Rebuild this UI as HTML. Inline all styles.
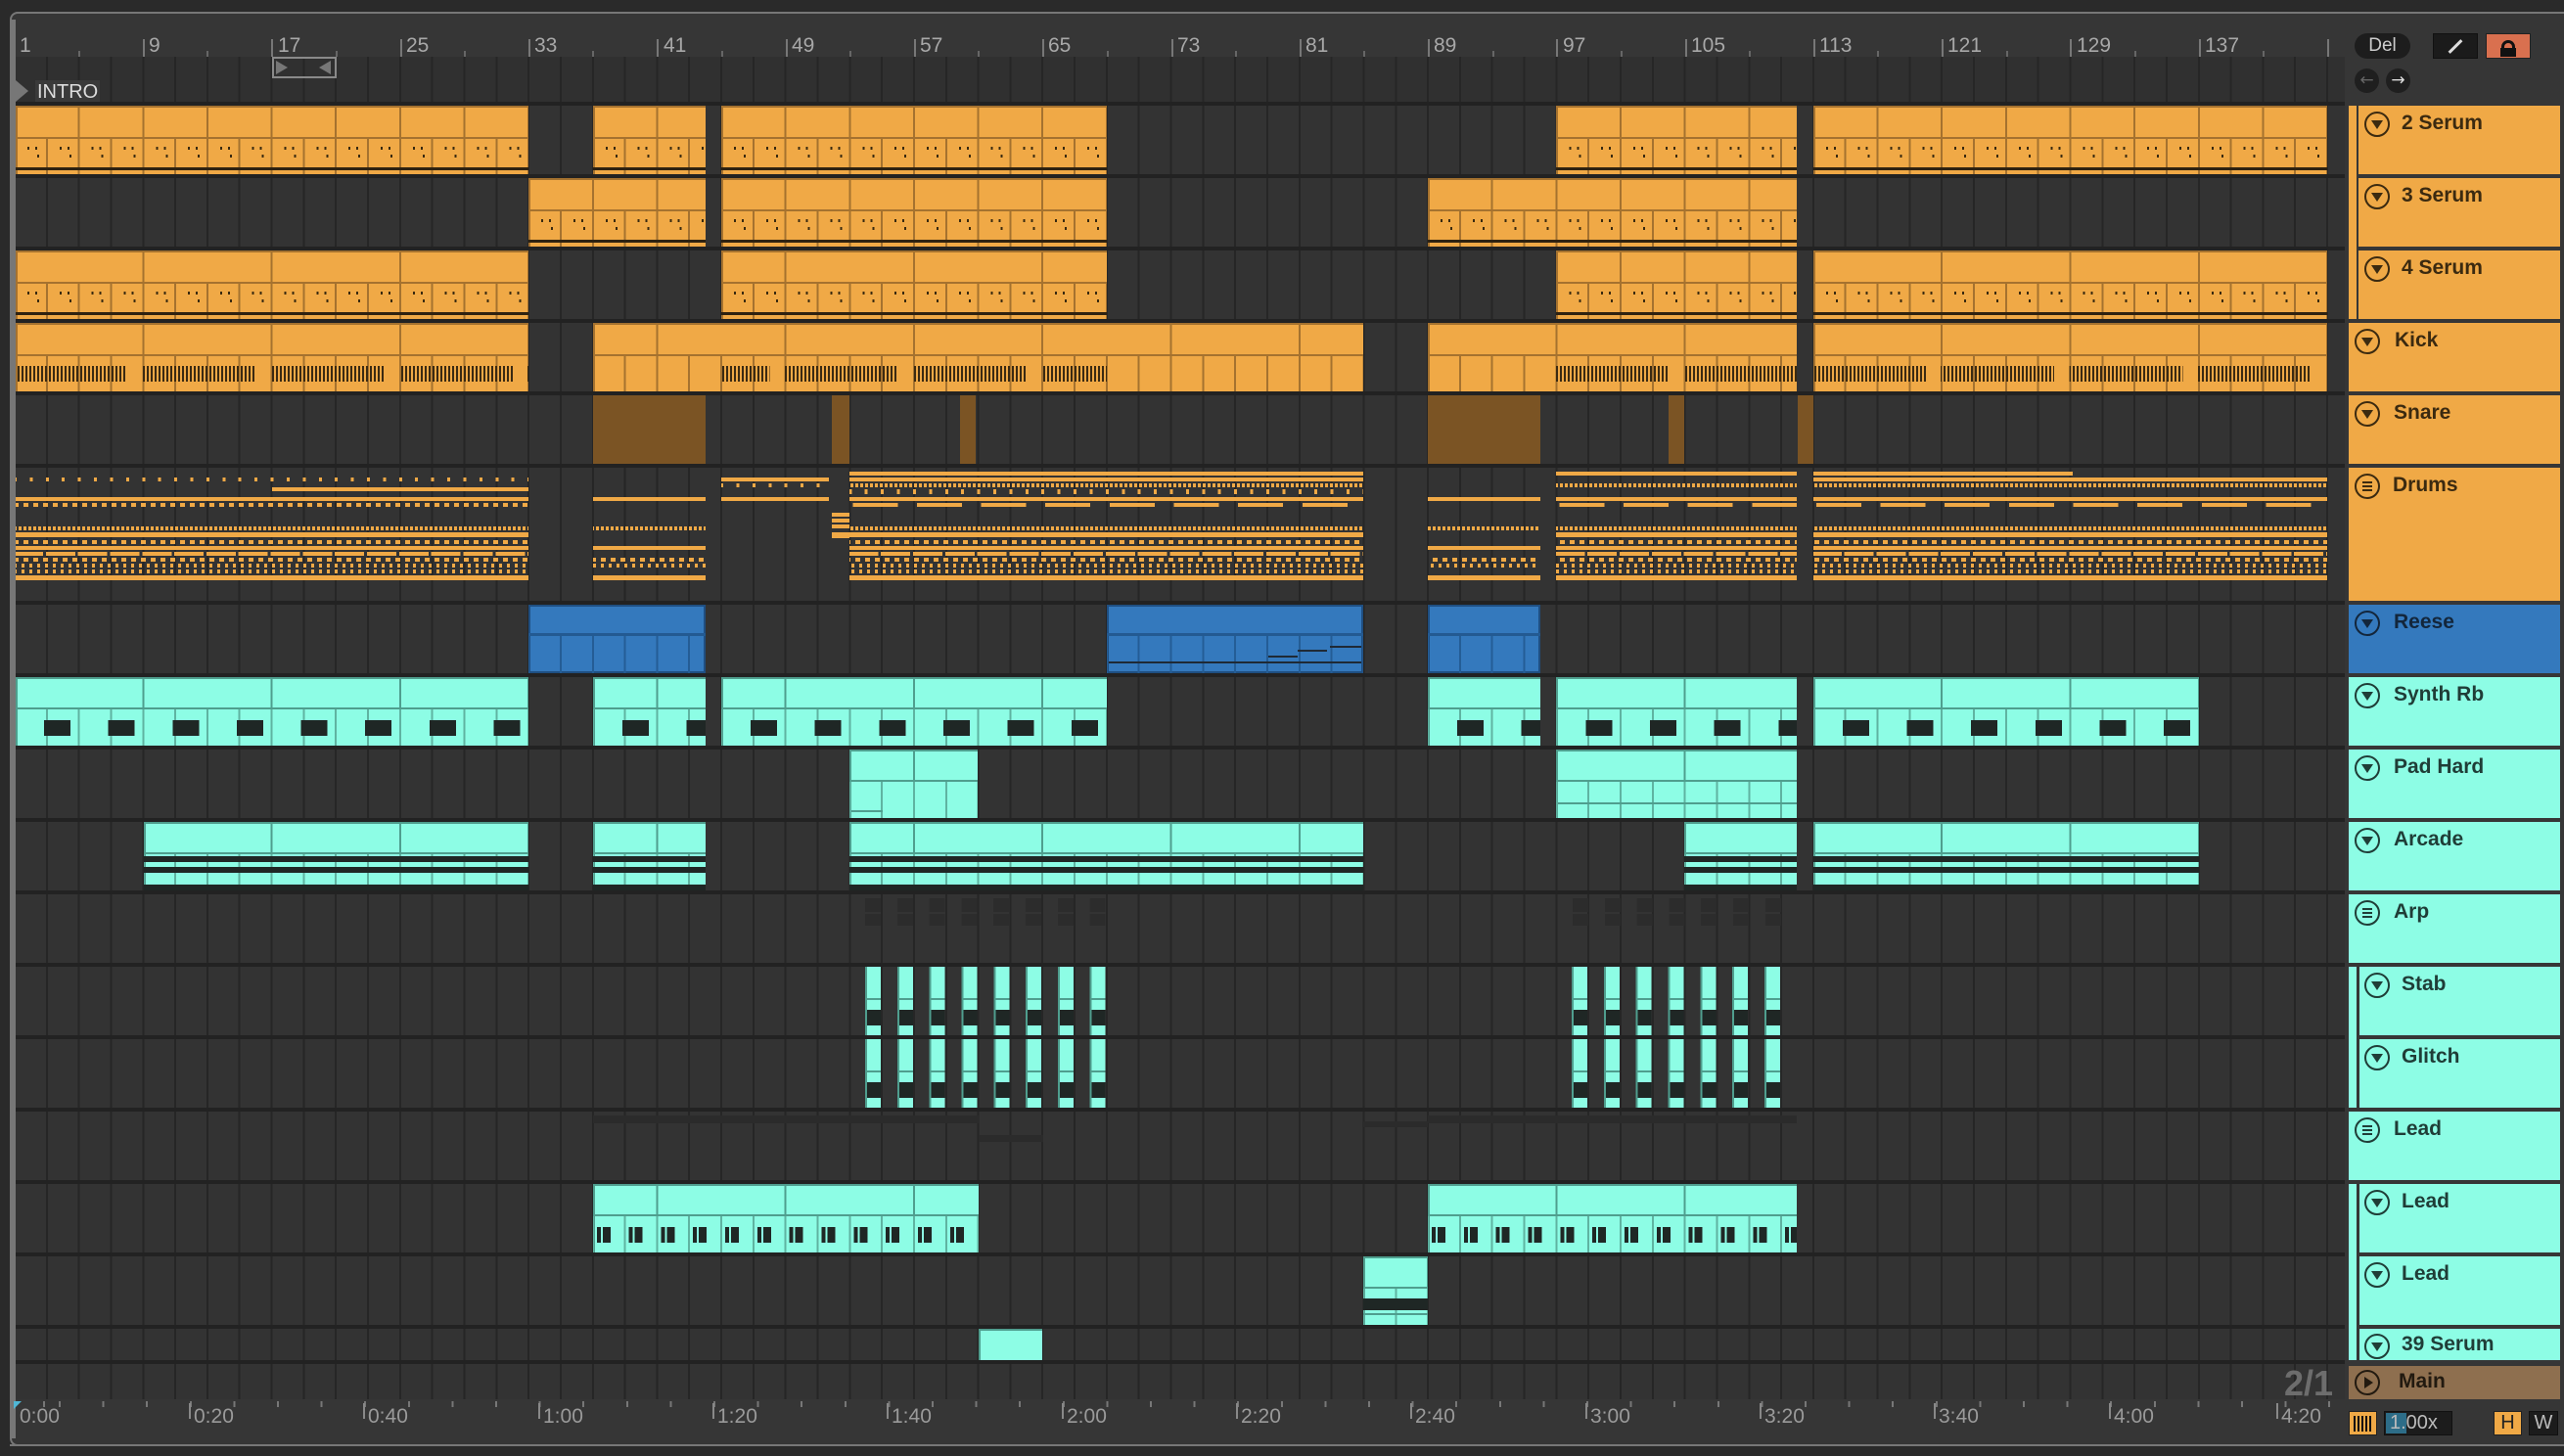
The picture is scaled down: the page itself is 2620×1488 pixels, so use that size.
<!DOCTYPE html>
<html><head><meta charset="utf-8">
<style>
*{margin:0;padding:0;box-sizing:border-box}
body{width:2620px;height:1488px;background:#2a2a2a;position:relative;overflow:hidden;font-family:"Liberation Sans",sans-serif}
.abs{position:absolute}
#frame{position:absolute;left:10px;top:12px;width:2620px;height:1466px;border:2px solid #777;border-right:none;border-radius:8px 0 0 8px;background:#363636}
#grid{position:absolute;left:16px;top:104px;width:2380px;height:1326px;background:#222}
.row{position:absolute;left:16px;width:2380px;background-color:#333;background-image:repeating-linear-gradient(90deg,#262626 0 2px,transparent 2px 32.82px);background-attachment:fixed;background-position:14px 0}
.topgrid{position:absolute;left:16px;top:58px;width:2380px;height:46px;background-color:#303030;background-image:repeating-linear-gradient(90deg,#262626 0 2px,transparent 2px 32.82px);background-attachment:fixed;background-position:14px 0}
.c{position:absolute;overflow:hidden}
.o{background:#f0a946;box-shadow:inset 2px 2px 0 #a5722f}
.o .h{position:absolute;left:0;right:0;top:0;height:34px;border-bottom:2px solid #a5722f;background:repeating-linear-gradient(90deg,#a5722f 0 2px,transparent 2px 65.64px);background-attachment:fixed;background-position:14px 0}
.o .h8{background:repeating-linear-gradient(90deg,#a5722f 0 2px,transparent 2px 131.28px);background-attachment:fixed;background-position:14px 0}
.o .b{position:absolute;left:0;right:0;top:34px;bottom:0;background:repeating-linear-gradient(90deg,#a5722f 0 2px,transparent 2px 32.82px);background-attachment:fixed;background-position:14px 0}
.dots{position:absolute;left:0;right:0;top:42px;height:3px;background:repeating-linear-gradient(90deg,transparent 0 14px,#3a2a10 14px 16px,transparent 16px 22px,#3a2a10 22px 24px,transparent 24px 32.82px);background-attachment:fixed;background-position:14px 0}
.dots2{position:absolute;left:0;right:0;top:50px;height:3px;background:repeating-linear-gradient(90deg,transparent 0 24px,#3a2a10 24px 26px,transparent 26px 32.82px);background-attachment:fixed;background-position:14px 0}
.dk{position:absolute;left:0;right:0;top:63px;height:3px;background:#2f2210}
.bar{position:absolute;left:0;right:0;top:44px;height:16px;background:repeating-linear-gradient(90deg,transparent 0 116px,#f0a946 116px 131.28px),repeating-linear-gradient(90deg,#3b2a12 0 2px,transparent 2px 4px);background-attachment:fixed;background-position:14px 0}
.sn{background:#7b5424}
.cy{background:#8dfde5;box-shadow:inset 2px 2px 0 #4f9e8e}
.cy .h{position:absolute;left:0;right:0;top:0;height:33px;border-bottom:2px solid #4f9e8e;background:repeating-linear-gradient(90deg,#4f9e8e 0 2px,transparent 2px 131.28px);background-attachment:fixed;background-position:14px 0}
.cy .b{position:absolute;left:0;right:0;top:33px;bottom:0;background:repeating-linear-gradient(90deg,#5fb3a1 0 2px,transparent 2px 32.82px);background-attachment:fixed;background-position:14px 0}
.blk{position:absolute;left:0;right:0;top:44px;height:16px;background:repeating-linear-gradient(90deg,transparent 0 31px,#1f2725 31px 58px,transparent 58px 65.64px);background-attachment:fixed;background-position:14px 0}
.lblk{position:absolute;left:0;right:0;top:44px;height:16px;background:repeating-linear-gradient(90deg,transparent 0 5px,#1f2725 5px 9px,transparent 9px 11px,#1f2725 11px 19px,transparent 19px 32.82px);background-attachment:fixed;background-position:14px 0}
.st{position:absolute;left:0;right:0;height:6px;background:#1f2725}
.bl{background:#3479bd;box-shadow:inset 0 0 0 2px #1f4f82}
.bl .h{position:absolute;left:0;right:0;top:0;height:32px;border-bottom:3px solid #235a92}
.bl .b{position:absolute;left:0;right:0;top:32px;bottom:0;background:repeating-linear-gradient(90deg,#245d96 0 2px,transparent 2px 32.82px);background-attachment:fixed;background-position:14px 0}
.dr{position:absolute;height:136px;top:478px}
.dr i{position:absolute;left:0;right:0;display:block;background-attachment:fixed;background-position:14px 0}
.sol{background:#f0a946}
.df{background:repeating-linear-gradient(90deg,#f0a946 0 3px,transparent 3px 5px)}
.dt{background:repeating-linear-gradient(90deg,#f0a946 0 3px,transparent 3px 16.41px)}
.dg{background:repeating-linear-gradient(90deg,transparent 0 4px,#f0a946 4px 50px,transparent 50px 65.64px)}
.dq{background:repeating-linear-gradient(90deg,#f0a946 0 5px,transparent 5px 10px)}
.dl{background:repeating-linear-gradient(90deg,#f0a946 0 30px,transparent 30px 32.82px)}
.dm{background:repeating-linear-gradient(90deg,#f0a946 0 3px,transparent 3px 8px)}
.rl{position:absolute;top:34px;font-size:21px;color:#a8a8a8;line-height:26px}
.tk{position:absolute;top:40px;width:2px;height:18px;background:#777}
.tm{position:absolute;top:52px;width:2px;height:6px;background:#666}
.hd{position:absolute;right:4px;font-size:21px;font-weight:bold;line-height:28px}
.hd span{position:absolute;top:4px}
.ic{position:absolute;top:6px;width:26px;height:26px;border:2px solid currentColor;border-radius:50%}
.ic:after{content:"";position:absolute;left:5px;top:7px;border-left:6px solid transparent;border-right:6px solid transparent;border-top:9px solid currentColor}
.ig{position:absolute;top:6px;width:26px;height:26px;border:2px solid currentColor;border-radius:50%}
.ig:after{content:"";position:absolute;left:6px;top:6px;width:10px;height:2px;background:currentColor;box-shadow:0 4px 0 currentColor,0 8px 0 currentColor}
.ho{background:#f0a946;color:#3b2a10}
.hc{background:#8dfde5;color:#1f3d37}
.strip{position:absolute;left:2400px;width:8px}
.tl{position:absolute;top:1436px;font-size:21px;color:#9a9a9a}
.tb{position:absolute;top:1434px;width:2px;height:16px;background:#888}
</style></head><body>
<div id="frame"></div>
<div class="topgrid"></div>
<div class="rl" style="left:20px">1</div><div class="tk" style="left:14px"></div>
<div class="rl" style="left:152px">9</div><div class="tk" style="left:146px"></div>
<div class="rl" style="left:284px">17</div><div class="tk" style="left:277px"></div>
<div class="rl" style="left:415px">25</div><div class="tk" style="left:409px"></div>
<div class="rl" style="left:546px">33</div><div class="tk" style="left:540px"></div>
<div class="rl" style="left:678px">41</div><div class="tk" style="left:671px"></div>
<div class="rl" style="left:809px">49</div><div class="tk" style="left:803px"></div>
<div class="rl" style="left:940px">57</div><div class="tk" style="left:934px"></div>
<div class="rl" style="left:1071px">65</div><div class="tk" style="left:1065px"></div>
<div class="rl" style="left:1203px">73</div><div class="tk" style="left:1197px"></div>
<div class="rl" style="left:1334px">81</div><div class="tk" style="left:1328px"></div>
<div class="rl" style="left:1465px">89</div><div class="tk" style="left:1459px"></div>
<div class="rl" style="left:1597px">97</div><div class="tk" style="left:1590px"></div>
<div class="rl" style="left:1728px">105</div><div class="tk" style="left:1722px"></div>
<div class="rl" style="left:1859px">113</div><div class="tk" style="left:1853px"></div>
<div class="rl" style="left:1990px">121</div><div class="tk" style="left:1984px"></div>
<div class="rl" style="left:2122px">129</div><div class="tk" style="left:2115px"></div>
<div class="rl" style="left:2253px">137</div><div class="tk" style="left:2247px"></div>
<div class="tk" style="left:2378px"></div>
<div class="tm" style="left:80px"></div><div class="tm" style="left:211px"></div><div class="tm" style="left:343px"></div><div class="tm" style="left:474px"></div><div class="tm" style="left:605px"></div><div class="tm" style="left:737px"></div><div class="tm" style="left:868px"></div><div class="tm" style="left:999px"></div><div class="tm" style="left:1131px"></div><div class="tm" style="left:1262px"></div><div class="tm" style="left:1393px"></div><div class="tm" style="left:1525px"></div><div class="tm" style="left:1656px"></div><div class="tm" style="left:1787px"></div><div class="tm" style="left:1918px"></div><div class="tm" style="left:2050px"></div><div class="tm" style="left:2181px"></div><div class="tm" style="left:2312px"></div>
<div class="abs" style="left:278px;top:58px;width:66px;height:22px;border:2px solid #8a8a8a"></div>
<div class="abs" style="left:282px;top:62px;border-left:12px solid #8a8a8a;border-top:7px solid transparent;border-bottom:7px solid transparent;opacity:.8"></div>
<div class="abs" style="left:326px;top:62px;border-right:12px solid #8a8a8a;border-top:7px solid transparent;border-bottom:7px solid transparent;opacity:.8"></div>
<div class="abs" style="left:16px;top:82px;border-left:13px solid #777;border-top:11px solid transparent;border-bottom:11px solid transparent"></div>
<div class="abs" style="left:36px;top:82px;padding:0 2px;background:#3a3a3a;color:#ddd;font-size:20px;line-height:24px">INTRO</div>

<div id="grid"></div>
<div class="row" style="top:108px;height:70px"></div>
<div class="row" style="top:182px;height:70px"></div>
<div class="row" style="top:256px;height:70px"></div>
<div class="row" style="top:330px;height:70px"></div>
<div class="row" style="top:404px;height:70px"></div>
<div class="row" style="top:478px;height:136px"></div>
<div class="row" style="top:618px;height:70px"></div>
<div class="row" style="top:692px;height:70px"></div>
<div class="row" style="top:766px;height:70px"></div>
<div class="row" style="top:840px;height:70px"></div>
<div class="row" style="top:914px;height:70px"></div>
<div class="row" style="top:988px;height:70px"></div>
<div class="row" style="top:1062px;height:70px"></div>
<div class="row" style="top:1136px;height:70px"></div>
<div class="row" style="top:1210px;height:70px"></div>
<div class="row" style="top:1284px;height:70px"></div>
<div class="row" style="top:1358px;height:32px"></div>
<div class="row" style="top:1394px;height:36px"></div>

<div class="c o" style="left:16px;top:108px;width:524px;height:70px"><div class="h"></div><div class="b"></div><div class="dots"></div><div class="dots2"></div><div class="dk"></div></div>
<div class="c o" style="left:606px;top:108px;width:115px;height:70px"><div class="h"></div><div class="b"></div><div class="dots"></div><div class="dots2"></div><div class="dk"></div></div>
<div class="c o" style="left:737px;top:108px;width:394px;height:70px"><div class="h"></div><div class="b"></div><div class="dots"></div><div class="dots2"></div><div class="dk"></div></div>
<div class="c o" style="left:1590px;top:108px;width:246px;height:70px"><div class="h"></div><div class="b"></div><div class="dots"></div><div class="dots2"></div><div class="dk"></div></div>
<div class="c o" style="left:1853px;top:108px;width:525px;height:70px"><div class="h"></div><div class="b"></div><div class="dots"></div><div class="dots2"></div><div class="dk"></div></div>
<div class="c o" style="left:540px;top:182px;width:181px;height:70px"><div class="h"></div><div class="b"></div><div class="dots"></div><div class="dots2"></div><div class="dk"></div></div>
<div class="c o" style="left:737px;top:182px;width:394px;height:70px"><div class="h"></div><div class="b"></div><div class="dots"></div><div class="dots2"></div><div class="dk"></div></div>
<div class="c o" style="left:1459px;top:182px;width:377px;height:70px"><div class="h"></div><div class="b"></div><div class="dots"></div><div class="dots2"></div><div class="dk"></div></div>
<div class="c o" style="left:16px;top:256px;width:524px;height:70px"><div class="h h8"></div><div class="b"></div><div class="dots"></div><div class="dots2"></div><div class="dk"></div></div>
<div class="c o" style="left:737px;top:256px;width:394px;height:70px"><div class="h h8"></div><div class="b"></div><div class="dots"></div><div class="dots2"></div><div class="dk"></div></div>
<div class="c o" style="left:1590px;top:256px;width:246px;height:70px"><div class="h"></div><div class="b"></div><div class="dots"></div><div class="dots2"></div><div class="dk"></div></div>
<div class="c o" style="left:1853px;top:256px;width:525px;height:70px"><div class="h h8"></div><div class="b"></div><div class="dots"></div><div class="dots2"></div><div class="dk"></div></div>
<div class="c o" style="left:16px;top:330px;width:524px;height:70px"><div class="h h8"></div><div class="b"></div><div class="bar"></div></div>
<div class="c o" style="left:606px;top:330px;width:787px;height:70px"><div class="h h8"></div><div class="b"></div><div class="bar" style="left:131px;right:auto;width:394px"></div></div>
<div class="c o" style="left:1459px;top:330px;width:377px;height:70px"><div class="h h8"></div><div class="b"></div><div class="bar" style="left:131px"></div></div>
<div class="c o" style="left:1853px;top:330px;width:525px;height:70px"><div class="h h8"></div><div class="b"></div><div class="bar"></div></div>
<div class="c sn" style="left:606px;top:404px;width:115px;height:70px"></div>
<div class="c sn" style="left:850px;top:404px;width:18px;height:70px"></div>
<div class="c sn" style="left:981px;top:404px;width:16px;height:70px"></div>
<div class="c sn" style="left:1459px;top:404px;width:115px;height:70px"></div>
<div class="c sn" style="left:1705px;top:404px;width:16px;height:70px"></div>
<div class="c sn" style="left:1837px;top:404px;width:16px;height:70px"></div>
<div class="dr" style="left:16px;width:524px"><i class="sol" style="top:20px;height:4px;left:262px"></i><i class="dt" style="top:10px;height:4px"></i><i class="sol" style="top:30px;height:4px"></i><i class="dq" style="top:36px;height:4px"></i><i class="df" style="top:60px;height:4px"></i><i class="sol" style="top:66px;height:5px"></i><i class="dq" style="top:74px;height:4px"></i><i class="sol" style="top:80px;height:4px"></i><i class="dl" style="top:86px;height:4px"></i><i class="dq" style="top:92px;height:4px"></i><i class="dm" style="top:98px;height:4px"></i><i class="dm" style="top:104px;height:4px"></i><i class="sol" style="top:110px;height:5px"></i></div>
<div class="dr" style="left:606px;width:115px"><i class="sol" style="top:30px;height:4px"></i><i class="df" style="top:60px;height:4px"></i><i class="sol" style="top:80px;height:4px"></i><i class="dq" style="top:92px;height:4px"></i><i class="dm" style="top:98px;height:4px"></i><i class="sol" style="top:110px;height:5px"></i></div>
<div class="dr" style="left:737px;width:110px"><i class="sol" style="top:10px;height:4px"></i><i class="dt" style="top:16px;height:4px"></i><i class="sol" style="top:30px;height:4px"></i></div>
<div class="dr" style="left:850px;width:18px"><i class="sol" style="top:46px;height:4px"></i><i class="sol" style="top:52px;height:4px"></i><i class="sol" style="top:58px;height:4px"></i><i class="sol" style="top:66px;height:6px"></i></div>
<div class="dr" style="left:868px;width:525px"><i class="sol" style="top:4px;height:4px"></i><i class="sol" style="top:10px;height:4px"></i><i class="df" style="top:16px;height:4px"></i><i class="dt" style="top:22px;height:5px"></i><i class="sol" style="top:30px;height:4px"></i><i class="dg" style="top:36px;height:4px"></i><i class="df" style="top:60px;height:4px"></i><i class="sol" style="top:66px;height:5px"></i><i class="dq" style="top:74px;height:4px"></i><i class="sol" style="top:80px;height:4px"></i><i class="dl" style="top:86px;height:4px"></i><i class="dq" style="top:92px;height:4px"></i><i class="dm" style="top:98px;height:4px"></i><i class="dm" style="top:104px;height:4px"></i><i class="sol" style="top:110px;height:5px"></i></div>
<div class="dr" style="left:1459px;width:115px"><i class="sol" style="top:30px;height:4px"></i><i class="df" style="top:60px;height:4px"></i><i class="sol" style="top:80px;height:4px"></i><i class="dq" style="top:92px;height:4px"></i><i class="dm" style="top:98px;height:4px"></i><i class="sol" style="top:110px;height:5px"></i></div>
<div class="dr" style="left:1590px;width:246px"><i class="sol" style="top:4px;height:4px"></i><i class="df" style="top:16px;height:4px"></i><i class="sol" style="top:30px;height:4px"></i><i class="dg" style="top:36px;height:4px"></i><i class="df" style="top:60px;height:4px"></i><i class="sol" style="top:66px;height:5px"></i><i class="dq" style="top:74px;height:4px"></i><i class="sol" style="top:80px;height:4px"></i><i class="dl" style="top:86px;height:4px"></i><i class="dq" style="top:92px;height:4px"></i><i class="dm" style="top:98px;height:4px"></i><i class="dm" style="top:104px;height:4px"></i><i class="sol" style="top:110px;height:5px"></i></div>
<div class="dr" style="left:1853px;width:525px"><i class="sol" style="top:4px;height:4px;right:260px"></i><i class="sol" style="top:10px;height:4px"></i><i class="df" style="top:16px;height:4px"></i><i class="sol" style="top:30px;height:4px"></i><i class="dg" style="top:36px;height:4px"></i><i class="df" style="top:60px;height:4px"></i><i class="sol" style="top:66px;height:5px"></i><i class="dq" style="top:74px;height:4px"></i><i class="sol" style="top:80px;height:4px"></i><i class="dl" style="top:86px;height:4px"></i><i class="dq" style="top:92px;height:4px"></i><i class="dm" style="top:98px;height:4px"></i><i class="dm" style="top:104px;height:4px"></i><i class="sol" style="top:110px;height:5px"></i></div>
<div class="c bl" style="left:540px;top:618px;width:181px;height:70px"><div class="h"></div><div class="b"></div></div>
<div class="c bl" style="left:1131px;top:618px;width:262px;height:70px"><div class="h"></div><div class="b"></div><div class="abs" style="left:2px;right:2px;top:58px;height:2px;background:#1f2a36"></div><div class="abs" style="left:165px;width:30px;top:52px;height:2px;background:#1f2a36"></div><div class="abs" style="left:195px;width:30px;top:46px;height:2px;background:#1f2a36"></div><div class="abs" style="left:228px;width:32px;top:42px;height:2px;background:#1f2a36"></div></div>
<div class="c bl" style="left:1459px;top:618px;width:115px;height:70px"><div class="h"></div><div class="b"></div></div>
<div class="c cy" style="left:16px;top:692px;width:524px;height:70px"><div class="h"></div><div class="b"></div><div class="blk"></div></div>
<div class="c cy" style="left:606px;top:692px;width:115px;height:70px"><div class="h"></div><div class="b"></div><div class="blk"></div></div>
<div class="c cy" style="left:737px;top:692px;width:394px;height:70px"><div class="h"></div><div class="b"></div><div class="blk"></div></div>
<div class="c cy" style="left:1459px;top:692px;width:115px;height:70px"><div class="h"></div><div class="b"></div><div class="blk"></div></div>
<div class="c cy" style="left:1590px;top:692px;width:246px;height:70px"><div class="h"></div><div class="b"></div><div class="blk"></div></div>
<div class="c cy" style="left:1853px;top:692px;width:394px;height:70px"><div class="h"></div><div class="b"></div><div class="blk"></div></div>
<div class="c cy" style="left:868px;top:766px;width:131px;height:70px"><div class="h"></div><div class="b"></div><div class="abs" style="left:2px;width:32px;top:62px;height:2px;background:#4f9e8e"></div></div>
<div class="c cy" style="left:1590px;top:766px;width:246px;height:70px"><div class="h"></div><div class="b"></div><div class="abs" style="left:2px;right:0;top:54px;height:2px;background:#4f9e8e"></div></div>
<div class="c cy" style="left:147px;top:840px;width:393px;height:70px"><div class="h"></div><div class="b"></div><div class="st" style="top:35px"></div><div class="st" style="top:46px"></div><div class="st" style="top:64px"></div></div>
<div class="c cy" style="left:606px;top:840px;width:115px;height:70px"><div class="h"></div><div class="b"></div><div class="st" style="top:35px"></div><div class="st" style="top:46px"></div><div class="st" style="top:64px"></div></div>
<div class="c cy" style="left:868px;top:840px;width:525px;height:70px"><div class="h"></div><div class="b"></div><div class="st" style="top:35px"></div><div class="st" style="top:46px"></div><div class="st" style="top:64px"></div></div>
<div class="c cy" style="left:1721px;top:840px;width:115px;height:70px"><div class="h"></div><div class="b"></div><div class="st" style="top:35px"></div><div class="st" style="top:46px"></div><div class="st" style="top:64px"></div></div>
<div class="c cy" style="left:1853px;top:840px;width:394px;height:70px"><div class="h"></div><div class="b"></div><div class="st" style="top:35px"></div><div class="st" style="top:46px"></div><div class="st" style="top:64px"></div></div>
<div class="abs" style="left:884px;top:918px;width:248px;height:14px;background:repeating-linear-gradient(90deg,#2c2c2c 0 16px,transparent 16px 32.8px)"></div>
<div class="abs" style="left:884px;top:934px;width:248px;height:12px;background:repeating-linear-gradient(90deg,#2c2c2c 0 16px,transparent 16px 32.8px)"></div>
<div class="abs" style="left:1607px;top:918px;width:215px;height:14px;background:repeating-linear-gradient(90deg,#2c2c2c 0 16px,transparent 16px 32.8px)"></div>
<div class="abs" style="left:1607px;top:934px;width:215px;height:12px;background:repeating-linear-gradient(90deg,#2c2c2c 0 16px,transparent 16px 32.8px)"></div>
<div class="abs" style="left:884px;top:988px;width:248px;height:70px;background:repeating-linear-gradient(90deg,#4f9e8e 0 2px,#8dfde5 2px 16px,transparent 16px 32.82px)"></div>
<div class="abs" style="left:884px;top:1062px;width:248px;height:70px;background:repeating-linear-gradient(90deg,#4f9e8e 0 2px,#8dfde5 2px 16px,transparent 16px 32.82px)"></div>
<div class="abs" style="left:1606px;top:988px;width:215px;height:70px;background:repeating-linear-gradient(90deg,#4f9e8e 0 2px,#8dfde5 2px 16px,transparent 16px 32.82px)"></div>
<div class="abs" style="left:1606px;top:1062px;width:215px;height:70px;background:repeating-linear-gradient(90deg,#4f9e8e 0 2px,#8dfde5 2px 16px,transparent 16px 32.82px)"></div>
<div class="abs" style="left:884px;top:1020px;width:248px;height:2px;background:repeating-linear-gradient(90deg,transparent 0 2px,#4f9e8e 2px 16px,transparent 16px 32.82px)"></div>
<div class="abs" style="left:884px;top:1094px;width:248px;height:2px;background:repeating-linear-gradient(90deg,transparent 0 2px,#4f9e8e 2px 16px,transparent 16px 32.82px)"></div>
<div class="abs" style="left:1606px;top:1020px;width:215px;height:2px;background:repeating-linear-gradient(90deg,transparent 0 2px,#4f9e8e 2px 16px,transparent 16px 32.82px)"></div>
<div class="abs" style="left:1606px;top:1094px;width:215px;height:2px;background:repeating-linear-gradient(90deg,transparent 0 2px,#4f9e8e 2px 16px,transparent 16px 32.82px)"></div>
<div class="abs" style="left:884px;top:1032px;width:248px;height:16px;background:repeating-linear-gradient(90deg,transparent 0 2px,#1f2725 2px 16px,transparent 16px 32.82px)"></div>
<div class="abs" style="left:884px;top:1106px;width:248px;height:16px;background:repeating-linear-gradient(90deg,transparent 0 2px,#1f2725 2px 16px,transparent 16px 32.82px)"></div>
<div class="abs" style="left:1606px;top:1032px;width:215px;height:16px;background:repeating-linear-gradient(90deg,transparent 0 2px,#1f2725 2px 16px,transparent 16px 32.82px)"></div>
<div class="abs" style="left:1606px;top:1106px;width:215px;height:16px;background:repeating-linear-gradient(90deg,transparent 0 2px,#1f2725 2px 16px,transparent 16px 32.82px)"></div>
<div class="abs" style="left:606px;top:1140px;width:394px;height:8px;background:#2b2b2b"></div>
<div class="abs" style="left:1000px;top:1160px;width:66px;height:7px;background:#2b2b2b"></div>
<div class="abs" style="left:1393px;top:1146px;width:66px;height:6px;background:#2b2b2b"></div>
<div class="abs" style="left:1459px;top:1140px;width:377px;height:8px;background:#2b2b2b"></div>
<div class="c cy" style="left:606px;top:1210px;width:394px;height:70px"><div class="h"></div><div class="b"></div><div class="lblk"></div></div>
<div class="c cy" style="left:1459px;top:1210px;width:377px;height:70px"><div class="h"></div><div class="b"></div><div class="lblk"></div></div>
<div class="c cy" style="left:1393px;top:1284px;width:66px;height:70px"><div class="h"></div><div class="b"></div><div class="st" style="top:43px;height:12px"></div><div class="abs" style="left:0;right:0;top:58px;height:2px;background:#4f9e8e"></div></div>
<div class="c cy" style="left:1000px;top:1358px;width:65px;height:32px"></div>

<div class="abs" style="left:10px;top:20px;width:6px;height:1450px;background:#777"></div>

<div class="abs" style="left:2396px;top:14px;width:224px;height:1416px;background:#363636"></div>
<div class="abs" style="left:2406px;top:34px;width:57px;height:26px;border-radius:13px;background:#1d1d1d;color:#ccc;font-size:19px;line-height:26px;text-align:center">Del</div>
<div class="abs" style="left:2486px;top:34px;width:46px;height:26px;background:#1b1b1b;border:1px solid #111"></div>
<div class="abs" style="left:2500px;top:46px;width:18px;height:3px;background:#ddd;transform:rotate(-45deg)"></div>
<div class="abs" style="left:2540px;top:34px;width:46px;height:26px;background:#d9704f;border:1px solid #222"></div>
<div class="abs" style="left:2556px;top:41px;width:14px;height:10px;border:3px solid #111;border-bottom:none;border-radius:7px 7px 0 0"></div>
<div class="abs" style="left:2555px;top:49px;width:16px;height:9px;background:#111"></div>
<div class="abs" style="left:2406px;top:70px;width:25px;height:25px;border-radius:50%;background:#1f1f1f;color:#666;font-size:17px;line-height:25px;text-align:center;font-family:'DejaVu Sans',sans-serif">←</div>
<div class="abs" style="left:2438px;top:70px;width:25px;height:25px;border-radius:50%;background:#1f1f1f;color:#ddd;font-size:17px;line-height:25px;text-align:center;font-family:'DejaVu Sans',sans-serif">→</div>

<div class="strip" style="top:108px;height:218px;background:#f0a946"></div>
<div class="hd ho" style="left:2410px;top:108px;height:70px"><div class="ic" style="left:6px"></div><span style="left:44px">2 Serum</span></div>
<div class="hd ho" style="left:2410px;top:182px;height:70px"><div class="ic" style="left:6px"></div><span style="left:44px">3 Serum</span></div>
<div class="hd ho" style="left:2410px;top:256px;height:70px"><div class="ic" style="left:6px"></div><span style="left:44px">4 Serum</span></div>
<div class="hd ho" style="left:2400px;top:330px;height:70px"><div class="ic" style="left:6px"></div><span style="left:47px">Kick</span></div>
<div class="hd ho" style="left:2400px;top:404px;height:70px"><div class="ic" style="left:6px"></div><span style="left:46px">Snare</span></div>
<div class="hd ho" style="left:2400px;top:478px;height:136px"><div class="ig" style="left:6px"></div><span style="left:45px">Drums</span></div>
<div class="hd" style="left:2400px;top:618px;height:70px;background:#3479bd;color:#13263b"><div class="ic" style="left:6px"></div><span style="left:46px">Reese</span></div>
<div class="hd hc" style="left:2400px;top:692px;height:70px"><div class="ic" style="left:6px"></div><span style="left:46px">Synth Rb</span></div>
<div class="hd hc" style="left:2400px;top:766px;height:70px"><div class="ic" style="left:6px"></div><span style="left:46px">Pad Hard</span></div>
<div class="hd hc" style="left:2400px;top:840px;height:70px"><div class="ic" style="left:6px"></div><span style="left:46px">Arcade</span></div>
<div class="hd hc" style="left:2400px;top:914px;height:70px"><div class="ig" style="left:6px"></div><span style="left:46px">Arp</span></div>
<div class="strip" style="top:988px;height:144px;background:#8dfde5"></div>
<div class="hd hc" style="left:2411px;top:988px;height:70px"><div class="ic" style="left:5px"></div><span style="left:43px">Stab</span></div>
<div class="hd hc" style="left:2411px;top:1062px;height:70px"><div class="ic" style="left:5px"></div><span style="left:43px">Glitch</span></div>
<div class="hd hc" style="left:2400px;top:1136px;height:70px"><div class="ig" style="left:6px"></div><span style="left:46px">Lead</span></div>
<div class="strip" style="top:1210px;height:180px;background:#8dfde5"></div>
<div class="hd hc" style="left:2411px;top:1210px;height:70px"><div class="ic" style="left:5px"></div><span style="left:43px">Lead</span></div>
<div class="hd hc" style="left:2411px;top:1284px;height:70px"><div class="ic" style="left:5px"></div><span style="left:43px">Lead</span></div>
<div class="hd hc" style="left:2411px;top:1358px;height:32px;overflow:hidden"><div class="ic" style="left:5px;top:5px"></div><span style="left:43px;top:2px">39 Serum</span></div>
<div class="hd" style="left:2400px;top:1396px;height:34px;background:#8e6f4f;color:#221a10"><div style="position:absolute;left:6px;top:4px;width:26px;height:26px;border:2px solid #221a10;border-radius:50%"></div><div style="position:absolute;left:16px;top:11px;border-left:9px solid #221a10;border-top:6px solid transparent;border-bottom:6px solid transparent"></div><span style="left:51px;top:2px">Main</span></div>

<div class="abs" style="left:2334px;top:1393px;font-size:36px;font-weight:bold;color:#6d6d6d">2/1</div>

<div class="abs" style="left:16px;top:1430px;width:2380px;height:8px;background:repeating-linear-gradient(90deg,#777 0 2px,transparent 2px 44.6px);background-position:44px 0;clip-path:inset(2px 0 0 0)"></div>
<div class="abs" style="left:14px;top:1432px;border-left:8px solid #4fb7d6;border-bottom:8px solid transparent"></div>
<div class="tl" style="left:20px">0:00</div>
<div class="tb" style="left:193px"></div><div class="tl" style="left:198px">0:20</div>
<div class="tb" style="left:371px"></div><div class="tl" style="left:376px">0:40</div>
<div class="tb" style="left:550px"></div><div class="tl" style="left:555px">1:00</div>
<div class="tb" style="left:728px"></div><div class="tl" style="left:733px">1:20</div>
<div class="tb" style="left:906px"></div><div class="tl" style="left:911px">1:40</div>
<div class="tb" style="left:1085px"></div><div class="tl" style="left:1090px">2:00</div>
<div class="tb" style="left:1263px"></div><div class="tl" style="left:1268px">2:20</div>
<div class="tb" style="left:1441px"></div><div class="tl" style="left:1446px">2:40</div>
<div class="tb" style="left:1620px"></div><div class="tl" style="left:1625px">3:00</div>
<div class="tb" style="left:1798px"></div><div class="tl" style="left:1803px">3:20</div>
<div class="tb" style="left:1976px"></div><div class="tl" style="left:1981px">3:40</div>
<div class="tb" style="left:2155px"></div><div class="tl" style="left:2160px">4:00</div>
<div class="tb" style="left:2326px"></div><div class="tl" style="left:2331px">4:20</div>

<div class="abs" style="left:2400px;top:1442px;width:29px;height:25px;background:#f0a946;border:1px solid #222"></div>
<div class="abs" style="left:2405px;top:1447px;width:20px;height:16px;background:repeating-linear-gradient(90deg,#111 0 2px,transparent 2px 4px)"></div>
<div class="abs" style="left:2436px;top:1442px;width:70px;height:25px;background:#1c1c1c;border:1px solid #111"></div>
<div class="abs" style="left:2438px;top:1444px;width:21px;height:21px;background:#2d6d88"></div>
<div class="abs" style="left:2442px;top:1442px;font-size:20px;line-height:25px;color:#bbb">1.00x</div>
<div class="abs" style="left:2548px;top:1442px;width:29px;height:25px;background:#f0a946;border:1px solid #222;color:#222;font-size:20px;line-height:23px;text-align:center">H</div>
<div class="abs" style="left:2584px;top:1442px;width:30px;height:25px;background:#1c1c1c;border:1px solid #111;color:#bbb;font-size:20px;line-height:23px;text-align:center">W</div>
<div class="abs" style="left:10px;top:1476px;width:2610px;height:2px;background:#777"></div>
</body></html>
